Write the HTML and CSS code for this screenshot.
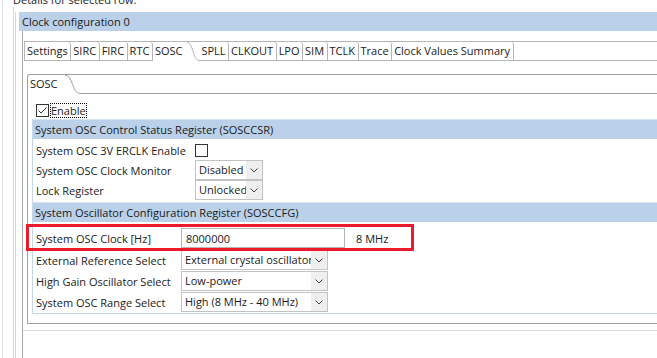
FILE: index.html
```html
<!DOCTYPE html>
<html lang="en">
<head>
    <meta charset="UTF-8">
    <meta name="viewport" content="width=device-width, initial-scale=1.0">
    <title>Clock configuration</title>
    <link rel="stylesheet" href="styles.css">
</head>
<body>
    <div class="rail-a">
        <div class="caption">Details for selected row:</div>
        <div class="rail-b">
            <div class="rail-c">
                <div class="section">
                    <div class="section-title">Clock configuration 0</div>
                    <div class="section-body">

                        <!-- Outer tab folder -->
                        <div class="outer-folder">
                            <div class="tabs">
                                <div class="tab">Settings</div>
                                <div class="tab">SIRC</div>
                                <div class="tab">FIRC</div>
                                <div class="tab">RTC</div>
                                <div class="tab selected">SOSC</div>
                                <svg class="tab-curve" width="12" height="19" viewBox="0 0 12 19">
                                    <path d="M0 0 C6 0 6 18.5 12 18.5" fill="none" stroke="#b5b5b5"/>
                                </svg>
                                <div class="tab">SPLL</div>
                                <div class="tab">CLKOUT</div>
                                <div class="tab">LPO</div>
                                <div class="tab">SIM</div>
                                <div class="tab">TCLK</div>
                                <div class="tab">Trace</div>
                                <div class="tab">Clock Values Summary</div>
                                <div class="tab-fill"></div>
                            </div>

                            <div class="outer-body">
                                <!-- Inner tab folder -->
                                <div class="inner-folder">
                                    <div class="tabs">
                                        <div class="tab selected">SOSC</div>
                                        <svg class="tab-curve" width="15" height="19" viewBox="0 0 15 19">
                                            <path d="M0 0 C8 0 7 18.5 15 18.5" fill="none" stroke="#a0a0a0"/>
                                        </svg>
                                        <div class="tab-fill"></div>
                                    </div>

                                    <div class="inner-body">
                                        <div class="enable">
                                            <svg class="check" width="13" height="13" viewBox="0 0 13 13">
                                                <rect x="0.5" y="0.5" width="12" height="12" fill="#fff" stroke="#333"/>
                                                <polyline points="2.5,6.5 5,9 10.5,3.5" fill="none" stroke="#333"/>
                                            </svg>
                                            <span class="focus">Enable</span>
                                        </div>

                                        <div class="group">
                                            <div class="group-title">System OSC Control Status Register (SOSCCSR)</div>
                                            <div class="fields status">
                                                <div class="label">System OSC 3V ERCLK Enable</div>
                                                <svg class="check" width="13" height="13" viewBox="0 0 13 13">
                                                    <rect x="0.5" y="0.5" width="12" height="12" fill="#fff" stroke="#333"/>
                                                </svg>

                                                <div class="label">System OSC Clock Monitor</div>
                                                <div class="combo short">
                                                    <span class="value">Disabled</span>
                                                    <span class="arrow"><svg width="8" height="5" viewBox="0 0 8 5"><polyline points="0.5,0.5 4,4 7.5,0.5" fill="none" stroke="#444"/></svg></span>
                                                </div>

                                                <div class="label">Lock Register</div>
                                                <div class="combo short">
                                                    <span class="value">Unlocked</span>
                                                    <span class="arrow"><svg width="8" height="5" viewBox="0 0 8 5"><polyline points="0.5,0.5 4,4 7.5,0.5" fill="none" stroke="#444"/></svg></span>
                                                </div>
                                            </div>

                                            <div class="group-title">System Oscillator Configuration Register (SOSCCFG)</div>
                                            <div class="fields config">
                                                <div class="label">System OSC Clock [Hz]</div>
                                                <div class="field">
                                                    <input class="textbox" type="text" value="8000000">
                                                    <span class="unit">8 MHz</span>
                                                </div>

                                                <div class="label">External Reference Select</div>
                                                <div class="combo long">
                                                    <span class="value">External crystal oscillator</span>
                                                    <span class="arrow"><svg width="8" height="5" viewBox="0 0 8 5"><polyline points="0.5,0.5 4,4 7.5,0.5" fill="none" stroke="#444"/></svg></span>
                                                </div>

                                                <div class="label">High Gain Oscillator Select</div>
                                                <div class="combo long">
                                                    <span class="value">Low-power</span>
                                                    <span class="arrow"><svg width="8" height="5" viewBox="0 0 8 5"><polyline points="0.5,0.5 4,4 7.5,0.5" fill="none" stroke="#444"/></svg></span>
                                                </div>

                                                <div class="label">System OSC Range Select</div>
                                                <div class="combo long">
                                                    <span class="value">High (8 MHz - 40 MHz)</span>
                                                    <span class="arrow"><svg width="8" height="5" viewBox="0 0 8 5"><polyline points="0.5,0.5 4,4 7.5,0.5" fill="none" stroke="#444"/></svg></span>
                                                </div>

                                                <!-- red annotation frame -->
                                                <div class="highlight"></div>
                                            </div>
                                        </div>
                                    </div>
                                </div>
                            </div>
                        </div>

                    </div>
                </div>
            </div>
        </div>
    </div>
</body>
</html>
```

FILE: styles.css
```css
html, body {
    margin: 0;
    height: 100%;
}
body {
    font-family: "Open Sans", "Noto Sans", sans-serif;
    font-size: 11px;
    color: #1a1a1a;
    background: #fff;
    overflow: hidden;
    display: flex;
    flex-direction: column;
}

/* left edge rails */
.rail-a {
    flex: 1;
    display: flex;
    flex-direction: column;
    margin-left: 2px;
    border-left: 1px solid #dce5ef;
    padding-left: 10px;
}
.caption {
    height: 15px;
    line-height: 15px;
    margin-top: -8px;
}
.rail-b {
    flex: 1;
    display: flex;
    flex-direction: column;
    border-left: 1px solid #ccd9e7;
    padding: 5px 0 0 1px;
}
.rail-c {
    flex: 1;
    display: flex;
    flex-direction: column;
    border-left: 1px solid #d6d6d6;
    padding-left: 3px;
}

/* section */
.section {
    flex: 1;
    display: flex;
    flex-direction: column;
    margin-right: -40px;
}
.section-title {
    height: 19px;
    line-height: 19px;
    padding-left: 3px;
    background: #bbd1e9;
}
.section-body {
    flex: 1;
    margin-left: 3px;
    border-left: 1px solid #a8a8a8;
    padding-top: 10px;
}

/* tab folders */
.tabs {
    display: flex;
    height: 19px;
}
.tab {
    line-height: 18px;
    padding: 0 2.5px 0 2px;
    border-right: 1px solid #b5b5b5;
    border-bottom: 1px solid #b5b5b5;
    border-top-right-radius: 3px;
    white-space: nowrap;
}
.tab.selected {
    border-right: none;
    border-bottom-color: transparent;
    padding-right: 5px;
}
.tab-curve {
    display: block;
    flex: none;
}
.tab-fill {
    flex: 1;
    border-bottom: 1px solid #b5b5b5;
}
.outer-folder {
    border-bottom: 1px solid #dadada;
}
.outer-folder > .tabs {
    margin-left: 1px;
    border-top: 1px solid #b5b5b5;
}
.outer-folder > .tabs .tab:first-child {
    border-left: 1px solid #b5b5b5;
}
.outer-body {
    padding: 13px 0 6px 4px;
}
.inner-folder {
    border: 1px solid #a0a0a0;
    border-right: none;
    border-top-left-radius: 3px;
}
.inner-folder .tab.selected {
    padding: 0 7px 0 2px;
}
.inner-folder .tab-fill {
    border-bottom-color: #a0a0a0;
}
.inner-body {
    padding: 8px 0 9px 4px;
}

/* enable checkbox */
.check {
    display: block;
}
.enable {
    display: flex;
    align-items: center;
    gap: 2px;
    height: 17px;
    margin-left: 4px;
}
.focus {
    outline: 1px dotted #000;
    line-height: 13px;
}

/* register groups */
.group {
    border-left: 1px solid #c5d7eb;
    border-bottom: 1px solid #c5d7eb;
}
.group-title {
    height: 19px;
    line-height: 19px;
    padding-left: 2px;
    background: #bbd1e9;
    border-top: 1px solid #d6e3f1;
}
.fields {
    display: grid;
    align-items: center;
    justify-items: start;
    padding-left: 3px;
}
.fields.status {
    grid-template-columns: 159px auto;
    grid-auto-rows: 20px;
    padding-top: 1px;
    padding-bottom: 2px;
}
.fields.config {
    position: relative;
    grid-template-columns: 145px auto;
    grid-template-rows: 22px 20px 20px 20px;
    row-gap: 1px;
    padding-top: 5px;
    padding-bottom: 1px;
}
.label {
    white-space: nowrap;
}

.combo {
    display: flex;
    height: 20px;
    box-sizing: border-box;
    border: 1px solid #c3c3c3;
    background: #fff;
}
.combo.short {
    width: 68px;
}
.combo.long {
    width: 147px;
}
.combo .value {
    flex: 1;
    padding-left: 3px;
    line-height: 18px;
    overflow: hidden;
    white-space: nowrap;
}
.combo .arrow {
    width: 16px;
    display: flex;
    align-items: center;
    justify-content: center;
    background: #efefef;
}
.combo .arrow svg {
    display: block;
}

.field {
    display: flex;
    align-items: center;
}
.textbox {
    width: 164px;
    height: 20px;
    box-sizing: border-box;
    margin: 0;
    border: 1px solid #b4b4b4;
    padding: 0 4px;
    font: inherit;
    color: inherit;
    outline: none;
}
.unit {
    margin-left: 11px;
}

.highlight {
    position: absolute;
    left: -7px;
    top: 2px;
    width: 388px;
    height: 27px;
    box-sizing: border-box;
    border: 3px solid #eb1b2b;
}
```
